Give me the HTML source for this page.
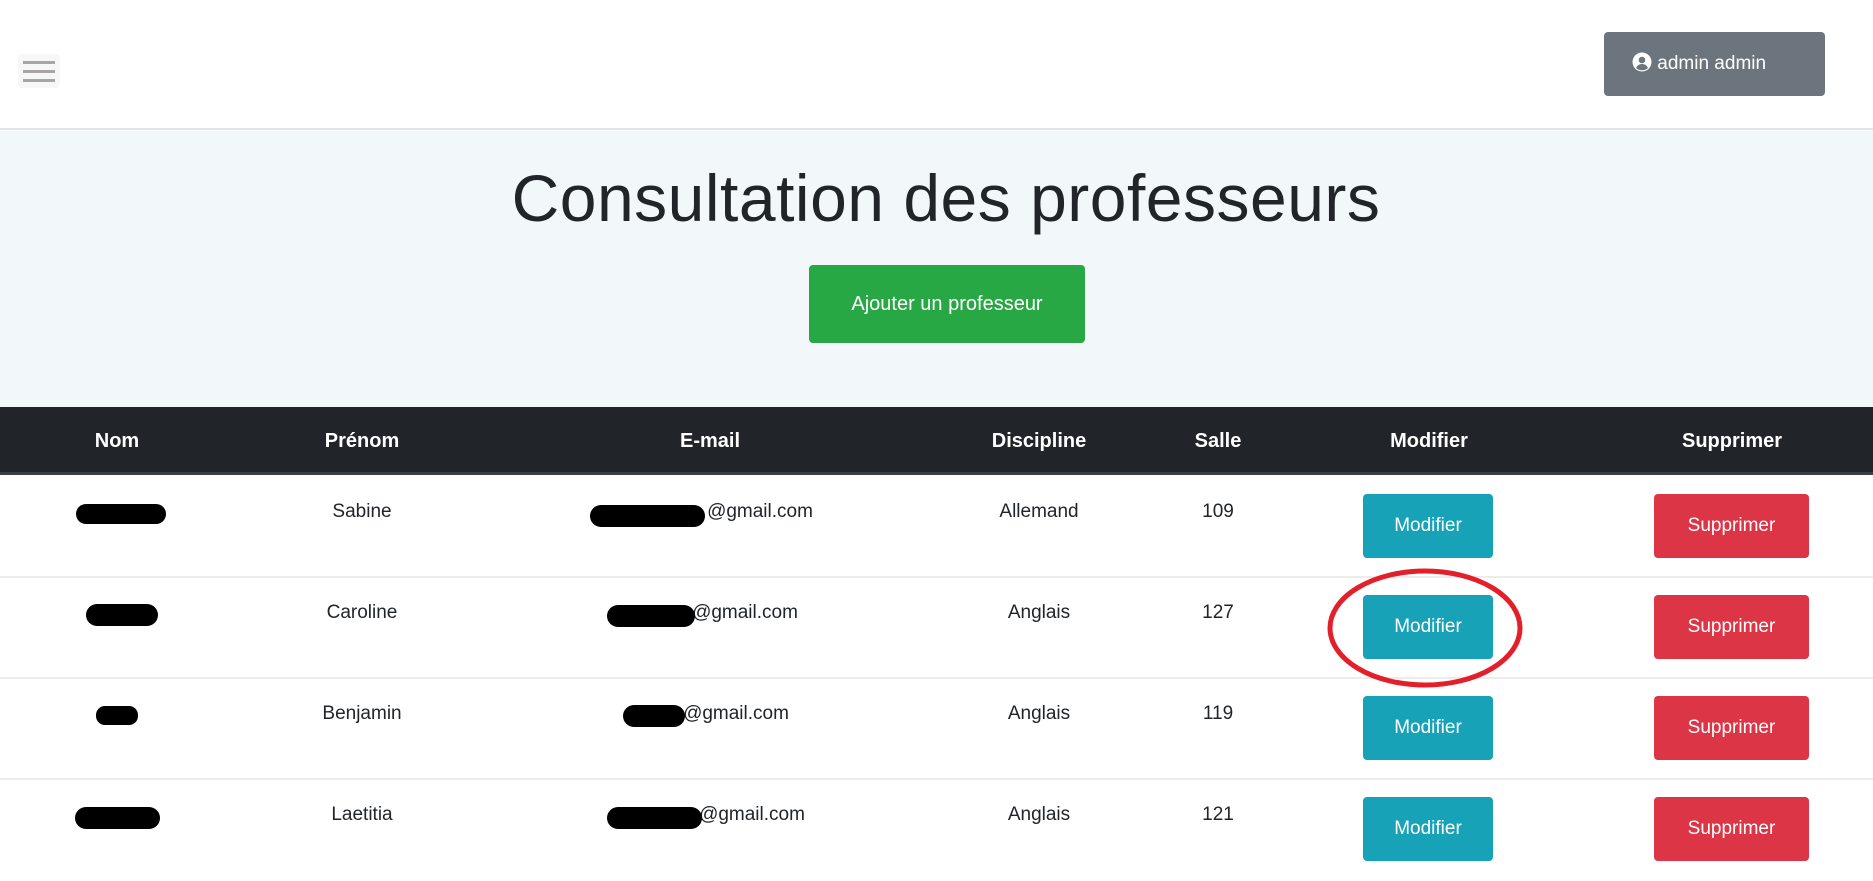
<!DOCTYPE html>
<html><head><meta charset="utf-8"><style>
*{margin:0;padding:0;box-sizing:border-box}
body{width:1873px;height:869px;overflow:hidden;background:#fff;font-family:"Liberation Sans",sans-serif;position:relative}
.a{position:absolute}
.c{position:absolute;text-align:center;transform:translateX(-50%);white-space:nowrap}
.hdr{left:0;top:0;width:1873px;height:130px;background:#fff;border-bottom:2px solid #dfe4e8}
.hero{left:0;top:131px;width:1873px;height:276px;background:#f2f7fa}
.th{left:0;top:407px;width:1873px;height:68px;background:#212529;border-bottom:3px solid #3a3f44}
.th .c{top:23px;color:#fff;font-weight:bold;font-size:20px}
.row{left:0;width:1873px;height:101px;border-bottom:2px solid #ececec}
.row .c{top:24px;color:#212529;font-size:19px}
.btn{position:absolute;border-radius:4px;color:#fff;font-size:19px;text-align:center;line-height:64px;height:64px;top:17px}
.m{left:1363px;width:130px;background:#17a2b8}
.s{left:1654px;width:155px;background:#dc3545}
</style></head><body>
<div class="a hdr"></div>
<div class="a" style="left:18px;top:54px;width:42px;height:34px;background:#f7f7f7;border-radius:4px"></div>
<div class="a" style="left:23px;top:61px;width:32px;height:3px;background:#aaa5a5"></div>
<div class="a" style="left:23px;top:70px;width:32px;height:3px;background:#aaa5a5"></div>
<div class="a" style="left:23px;top:79px;width:32px;height:3px;background:#aaa5a5"></div>
<div class="a" style="left:1604px;top:32px;width:221px;height:64px;background:#6c757d;border-radius:4px;color:#fff;font-size:19px;line-height:64px;padding-left:28px">
<svg width="20" height="20" viewBox="0 0 20 20" style="vertical-align:-3px"><circle cx="10" cy="10" r="9.5" fill="#fff"/><circle cx="10" cy="8" r="3.3" fill="#6c757d"/><path d="M4 16c1.5-3 3.5-4 6-4s4.5 1 6 4c-1.6 1.5-3.7 2.3-6 2.3S5.6 17.5 4 16z" fill="#6c757d"/></svg> admin admin</div>
<div class="a hero"></div>
<div class="c" style="left:946px;top:160px;font-size:66px;color:#212529;letter-spacing:0.5px">Consultation des professeurs</div>
<div class="a" style="left:809px;top:265px;width:276px;height:78px;background:#28a745;border-radius:4px;color:#fff;font-size:20px;text-align:center;line-height:78px">Ajouter un professeur</div>
<div class="a th">
<div class="c" style="left:117px">Nom</div><div class="c" style="left:362px">Prénom</div><div class="c" style="left:710px">E-mail</div><div class="c" style="left:1039px">Discipline</div><div class="c" style="left:1218px">Salle</div><div class="c" style="left:1429px">Modifier</div><div class="c" style="left:1732px">Supprimer</div>
</div>

<div class="a row" style="top:477px">
<div class="a" style="left:76px;top:27px;width:90px;height:20px;background:#000;border-radius:10px"></div>
<div class="c" style="left:362px">Sabine</div>
<div class="c" style="left:760px">@gmail.com</div>
<div class="a" style="left:590px;top:28px;width:115px;height:22px;background:#000;border-radius:11px"></div>
<div class="c" style="left:1039px">Allemand</div><div class="c" style="left:1218px">109</div>
<div class="btn m">Modifier</div><div class="btn s">Supprimer</div></div>

<div class="a row" style="top:578px">
<div class="a" style="left:86px;top:26px;width:72px;height:22px;background:#000;border-radius:11px"></div>
<div class="c" style="left:745px">@gmail.com</div>
<div class="a" style="left:607px;top:27px;width:88px;height:22px;background:#000;border-radius:11px"></div>
<div class="c" style="left:362px">Caroline</div>
<div class="c" style="left:1039px">Anglais</div><div class="c" style="left:1218px">127</div>
<div class="btn m">Modifier</div><div class="btn s">Supprimer</div></div>

<div class="a row" style="top:679px">
<div class="a" style="left:96px;top:27px;width:42px;height:19px;background:#000;border-radius:9px"></div>
<div class="c" style="left:362px">Benjamin</div>
<div class="c" style="left:736px">@gmail.com</div>
<div class="a" style="left:623px;top:26px;width:62px;height:22px;background:#000;border-radius:11px"></div>
<div class="c" style="left:1039px">Anglais</div><div class="c" style="left:1218px">119</div>
<div class="btn m">Modifier</div><div class="btn s">Supprimer</div></div>

<div class="a row" style="top:780px;border-bottom:none">
<div class="a" style="left:75px;top:27px;width:85px;height:22px;background:#000;border-radius:11px"></div>
<div class="c" style="left:362px">Laetitia</div>
<div class="c" style="left:752px">@gmail.com</div>
<div class="a" style="left:607px;top:27px;width:95px;height:22px;background:#000;border-radius:11px"></div>
<div class="c" style="left:1039px">Anglais</div><div class="c" style="left:1218px">121</div>
<div class="btn m">Modifier</div><div class="btn s">Supprimer</div></div>

<svg class="a" style="left:1322px;top:565px" width="206" height="126"><ellipse cx="103" cy="63" rx="95" ry="57" fill="none" stroke="#e3202a" stroke-width="5"/></svg>
</body></html>
